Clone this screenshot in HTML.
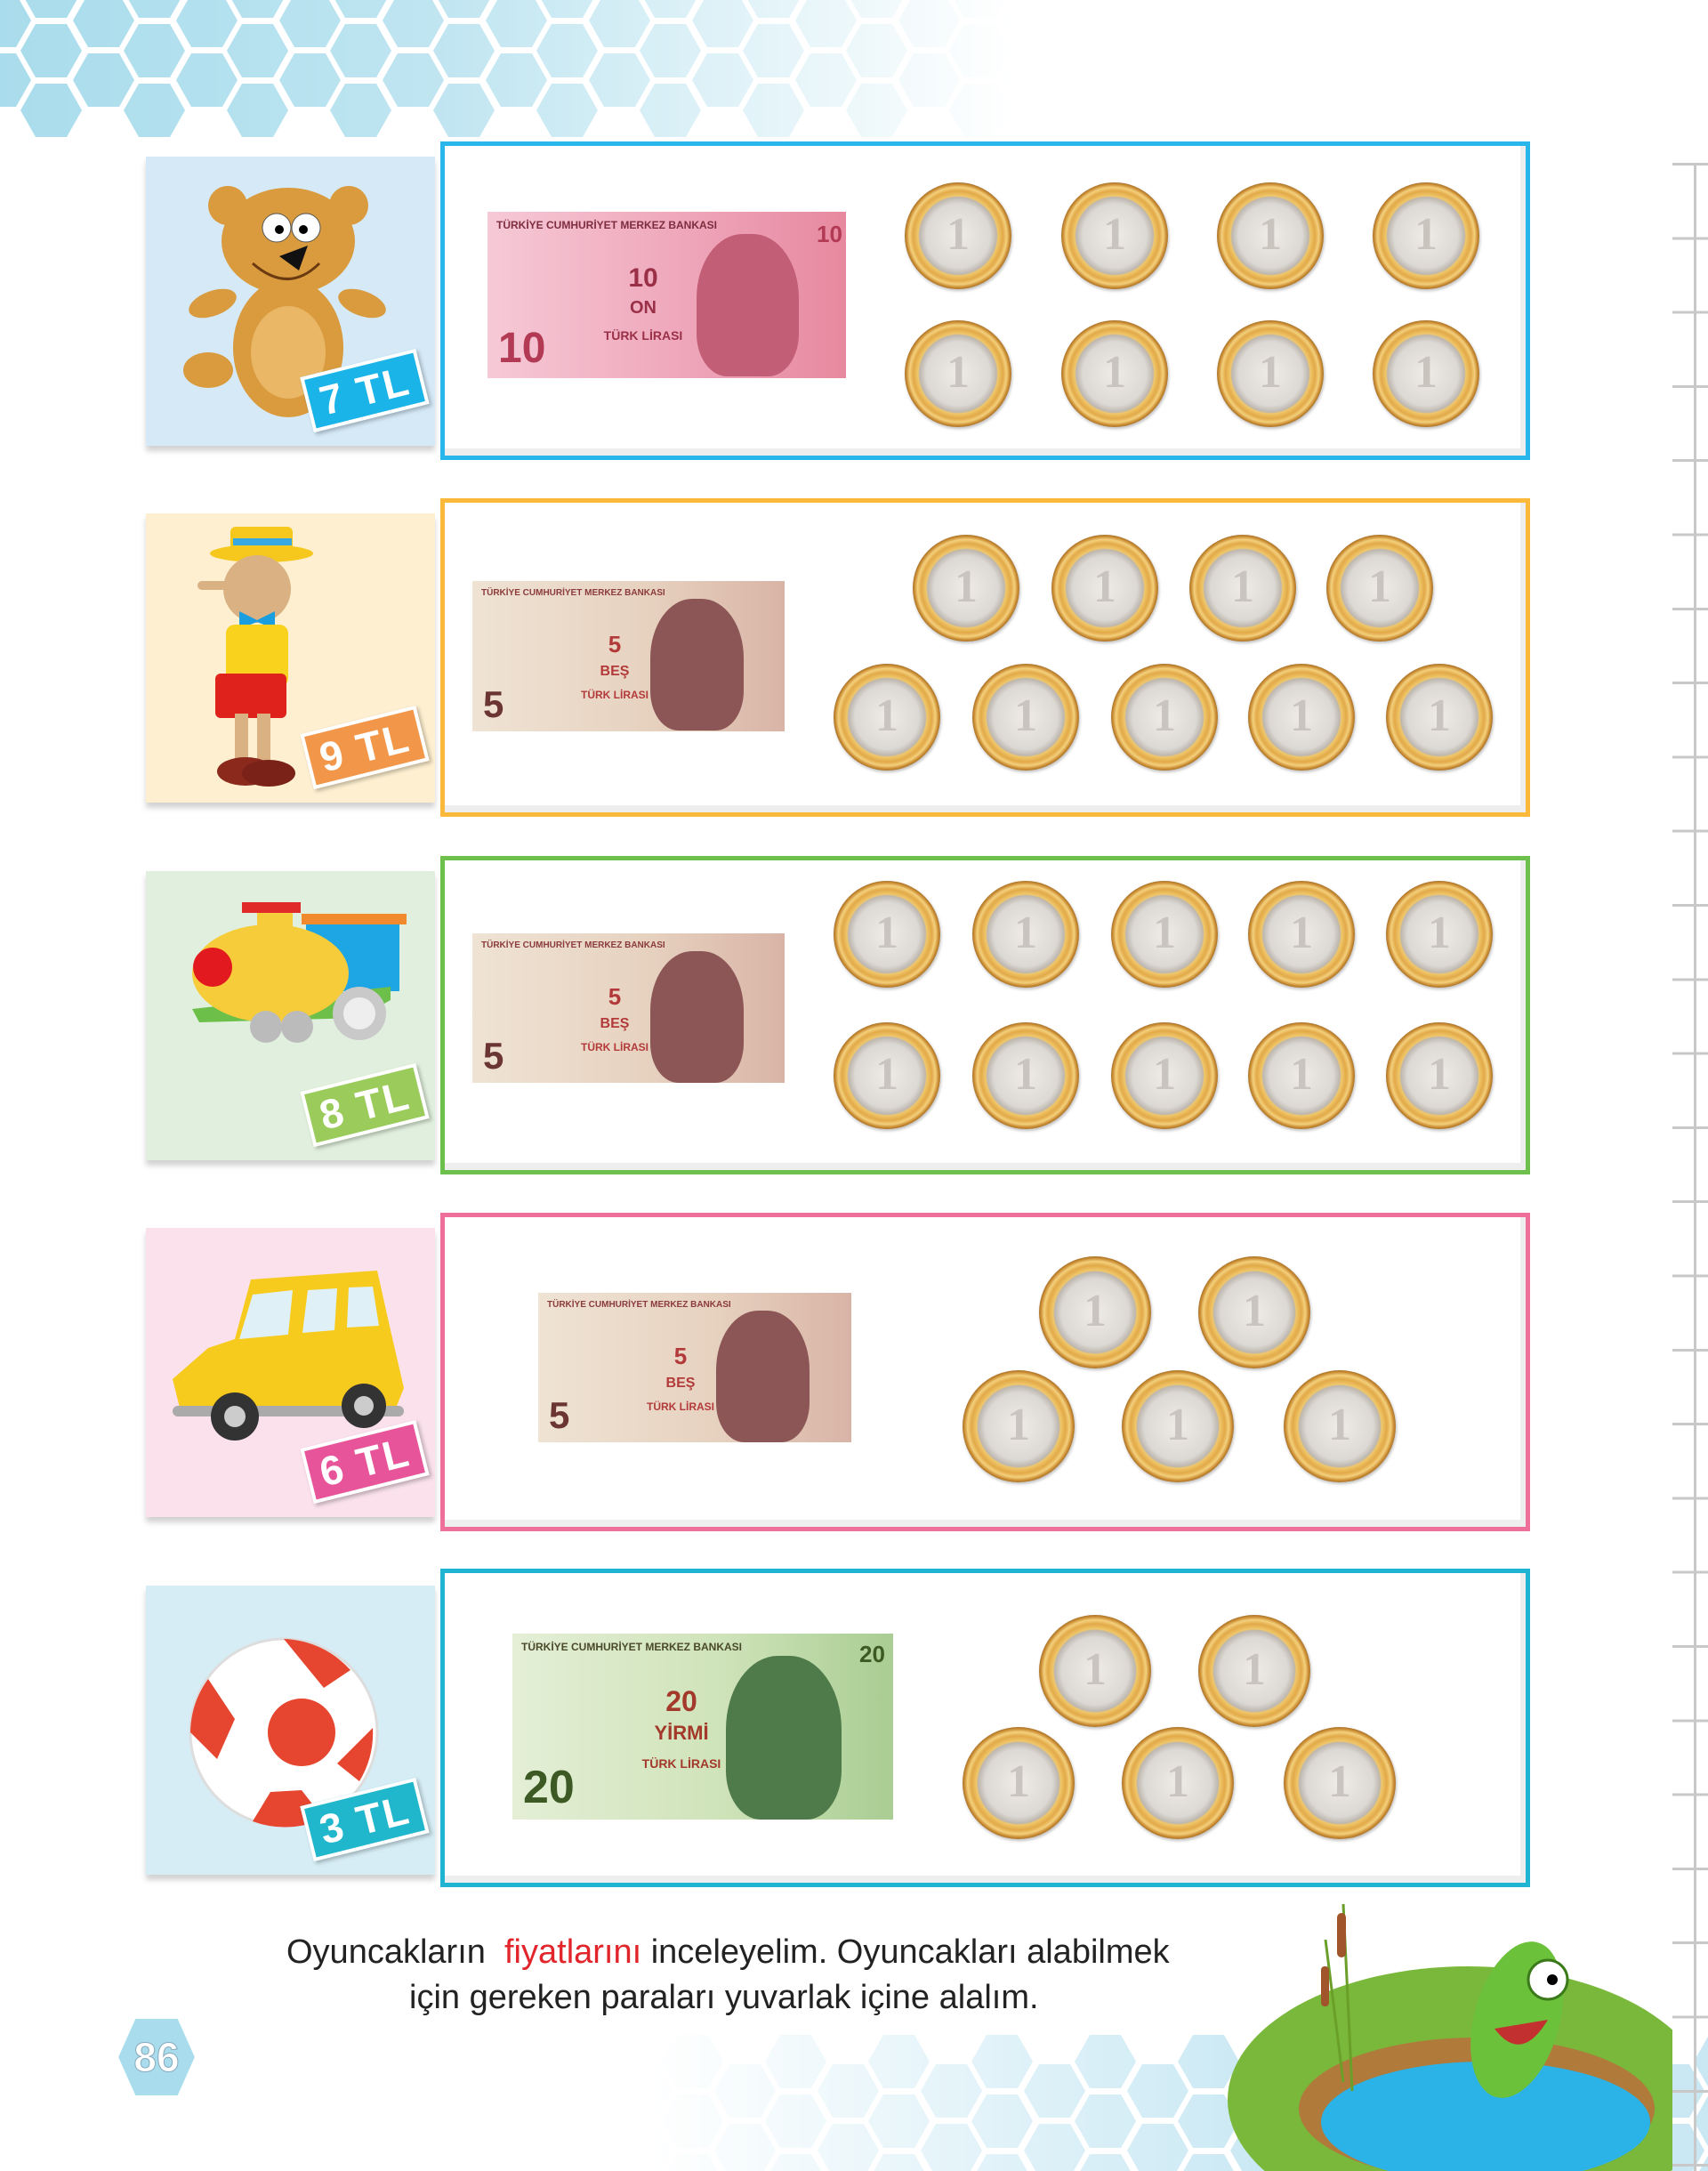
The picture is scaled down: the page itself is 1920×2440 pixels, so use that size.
<!DOCTYPE html>
<html><head><meta charset="utf-8"><style>
*{margin:0;padding:0;box-sizing:border-box}
body{width:1920px;height:2440px;background:#fff;position:relative;overflow:hidden;font-family:"Liberation Sans",sans-serif}
.abs{position:absolute}
.panel{position:absolute;left:164px;width:325px;height:325px;box-shadow:0 6px 6px rgba(0,0,0,.18)}
.box{position:absolute;left:495px;width:1225px;height:358px;border:5px solid;background:#fff;box-shadow:inset -6px -8px 0 #eee}
.lab{position:absolute;width:134px;height:64px;border:4px solid #fff;color:#fff;font-size:46px;font-weight:bold;text-align:center;line-height:56px;transform:rotate(-14deg);box-shadow:2px 3px 4px rgba(0,0,0,.25);letter-spacing:2px}
.coin{position:absolute;width:120px;height:120px;border-radius:50%;
background:radial-gradient(circle closest-side,#efece8 0,#dcd8d3 60%,#bdb7af 72%,#f0c76a 75%,#e2a948 84%,#f4d07c 91%,#c8892f 97%,#a87530 100%);
box-shadow:1px 2px 3px rgba(0,0,0,.25);color:#c9c4bd;font:bold 52px "Liberation Serif",serif;text-align:center;line-height:118px}
.note{position:absolute;overflow:hidden}
.note .t{position:absolute;left:10px;top:8px;font-size:12px;font-weight:bold;white-space:nowrap}
.note .big{position:absolute;left:12px;bottom:6px;font-weight:bold;font-size:48px}
.note .mid{position:absolute;font-weight:bold;text-align:center;line-height:1}
.note .face{position:absolute;border-radius:45% 45% 30% 30%}
.ruler{position:absolute;left:1880px;top:183px;width:40px;height:2257px;background:repeating-linear-gradient(to bottom,#c8c8c8 0 3px,transparent 3px 83.3px)}
.txt{position:absolute;font-family:"Liberation Sans Narrow","Liberation Sans",sans-serif;font-size:38px;color:#222;white-space:nowrap}
</style></head><body>

<svg class="abs" style="left:0;top:0" width="1200" height="160">
<defs>
<linearGradient id="fg" x1="0" x2="1"><stop offset="0" stop-color="#fff" stop-opacity="1"/><stop offset=".4" stop-color="#fff" stop-opacity=".75"/><stop offset=".95" stop-color="#fff" stop-opacity="0"/></linearGradient>
<mask id="m"><rect width="1200" height="160" fill="url(#fg)"/></mask>
<pattern id="hA" width="116" height="67" patternUnits="userSpaceOnUse" x="23" y="27">
<polygon points="17,0 52,0 69,30 52,60 17,60 0,30" fill="#a9dcec"/>
</pattern>
<pattern id="hB" width="116" height="67" patternUnits="userSpaceOnUse" x="82" y="-7">
<polygon points="17,0 52,0 69,30 52,60 17,60 0,30" fill="#a9dcec"/>
</pattern>
</defs>
<g mask="url(#m)"><rect width="1200" height="154" fill="url(#hA)"/><rect width="1200" height="121" fill="url(#hB)"/></g>
</svg>

<svg class="abs" style="left:0;top:2287px" width="1920" height="153">
<defs>
<linearGradient id="fg2" x1="0" x2="1920" gradientUnits="userSpaceOnUse"><stop offset=".38" stop-color="#fff" stop-opacity="0"/><stop offset=".75" stop-color="#fff" stop-opacity=".85"/></linearGradient>
<mask id="m2"><rect width="1920" height="153" fill="url(#fg2)"/></mask>
<pattern id="hC" width="116" height="67" patternUnits="userSpaceOnUse" x="48" y="0">
<polygon points="17,0 52,0 69,30 52,60 17,60 0,30" fill="#bfe4f1"/>
</pattern>
<pattern id="hD" width="116" height="67" patternUnits="userSpaceOnUse" x="107" y="33">
<polygon points="17,0 52,0 69,30 52,60 17,60 0,30" fill="#bfe4f1"/>
</pattern>
</defs>
<g mask="url(#m2)"><rect x="700" width="1220" height="153" fill="url(#hC)"/><rect x="700" y="33" width="1220" height="120" fill="url(#hD)"/></g>
</svg>

<div class="ruler"></div>
<div class="abs" style="left:1904px;top:183px;width:3px;height:2257px;background:#c8c8c8"></div>

<!-- Row 1 -->
<div class="panel" style="top:176px;background:#d5e9f7">
<svg width="325" height="325" style="position:absolute;left:0;top:0">
<ellipse cx="160" cy="215" rx="62" ry="78" fill="#d99b3e"/>
<ellipse cx="160" cy="220" rx="42" ry="52" fill="#e9b766"/>
<ellipse cx="75" cy="165" rx="28" ry="14" fill="#d99b3e" transform="rotate(-20 75 165)"/>
<ellipse cx="243" cy="165" rx="28" ry="14" fill="#d99b3e" transform="rotate(20 243 165)"/>
<ellipse cx="70" cy="240" rx="28" ry="20" fill="#d99b3e"/>
<ellipse cx="160" cy="95" rx="75" ry="60" fill="#d99b3e"/>
<circle cx="92" cy="55" r="22" fill="#d99b3e"/><circle cx="228" cy="55" r="22" fill="#d99b3e"/>
<circle cx="147" cy="80" r="16" fill="#fff" stroke="#555"/><circle cx="180" cy="80" r="16" fill="#fff" stroke="#555"/>
<circle cx="150" cy="82" r="5"/><circle cx="177" cy="82" r="5"/>
<path d="M150 112 L182 100 L172 128 Z" fill="#111"/>
<path d="M120 120 Q160 155 195 120" stroke="#6a3a10" stroke-width="3" fill="none"/>
</svg>
<div class="lab" style="left:179px;top:231px;background:#1ab4e8">7 TL</div>
</div>
<div class="box" style="top:159px;border-color:#29b6ea"></div>
<div class="note" style="left:548px;top:238px;width:403px;height:187px;background:linear-gradient(90deg,#f6c9d6,#eea3b8 60%,#e7899f)">
<div class="t" style="color:#7d2d3e">TÜRKİYE CUMHURİYET MERKEZ BANKASI</div>
<div class="face" style="left:235px;top:25px;width:115px;height:160px;background:#c25e75"></div>
<div class="big" style="color:#b33a55">10</div>
<div class="mid" style="left:130px;top:60px;width:90px;font-size:30px;color:#9a3047">10<br><span style="font-size:20px">ON</span><br><span style="font-size:14px">TÜRK LİRASI</span></div>
<div class="t" style="left:370px;top:10px;font-size:26px;color:#b33a55">10</div>
</div>
<div class="coin" style="left:1017px;top:205px">1</div><div class="coin" style="left:1193px;top:205px">1</div><div class="coin" style="left:1368px;top:205px">1</div><div class="coin" style="left:1543px;top:205px">1</div>
<div class="coin" style="left:1017px;top:360px">1</div><div class="coin" style="left:1193px;top:360px">1</div><div class="coin" style="left:1368px;top:360px">1</div><div class="coin" style="left:1543px;top:360px">1</div>

<!-- Row 2 -->
<div class="panel" style="top:577px;background:#fdefcf">
<svg width="325" height="325" style="position:absolute;left:0;top:0">
<rect x="95" y="15" width="70" height="35" rx="6" fill="#f6c81d"/><ellipse cx="130" cy="45" rx="58" ry="10" fill="#f6c81d"/>
<rect x="98" y="28" width="66" height="8" fill="#36a9e0"/>
<circle cx="125" cy="85" r="38" fill="#d9b183"/>
<rect x="58" y="76" width="40" height="10" rx="5" fill="#d9b183"/>
<path d="M105 110 L125 120 L145 110 L145 130 L125 122 L105 130Z" fill="#1a9ee0"/>
<rect x="90" y="125" width="70" height="70" rx="10" fill="#f8d21c"/>
<rect x="78" y="180" width="80" height="50" rx="6" fill="#e0221d"/>
<rect x="100" y="225" width="15" height="55" fill="#d9b183"/><rect x="125" y="225" width="15" height="55" fill="#d9b183"/>
<ellipse cx="112" cy="290" rx="32" ry="16" fill="#8b2a1c"/><ellipse cx="138" cy="292" rx="30" ry="15" fill="#7b2218"/>
</svg>
<div class="lab" style="left:179px;top:231px;background:#f29749">9 TL</div>
</div>
<div class="box" style="top:560px;border-color:#fbb93b"></div>
<div class="note" style="left:531px;top:653px;width:351px;height:169px;background:linear-gradient(90deg,#efe3d4,#e7d2c0 55%,#d9b4a6)">
<div class="t" style="color:#8b3b3b;font-size:10px">TÜRKİYE CUMHURİYET MERKEZ BANKASI</div>
<div class="face" style="left:200px;top:20px;width:105px;height:148px;background:#8c5656"></div>
<div class="big" style="color:#6b3535;font-size:42px">5</div>
<div class="mid" style="left:120px;top:58px;width:80px;font-size:26px;color:#b33a3a">5<br><span style="font-size:16px">BEŞ</span><br><span style="font-size:12px">TÜRK LİRASI</span></div>
</div>
<div class="coin" style="left:1026px;top:601px">1</div><div class="coin" style="left:1182px;top:601px">1</div><div class="coin" style="left:1337px;top:601px">1</div><div class="coin" style="left:1491px;top:601px">1</div>
<div class="coin" style="left:937px;top:746px">1</div><div class="coin" style="left:1093px;top:746px">1</div><div class="coin" style="left:1249px;top:746px">1</div><div class="coin" style="left:1403px;top:746px">1</div><div class="coin" style="left:1558px;top:746px">1</div>

<!-- Row 3 -->
<div class="panel" style="top:979px;background:#e1f0de">
<svg width="325" height="325" style="position:absolute;left:0;top:0">
<rect x="180" y="55" width="105" height="80" fill="#1ea6e4"/><rect x="175" y="48" width="118" height="12" fill="#f08a2c"/>
<path d="M52 155 L275 130 L275 145 L240 165 L60 170Z" fill="#6cc04a"/>
<ellipse cx="140" cy="115" rx="88" ry="55" fill="#f6cc3a"/>
<rect x="125" y="40" width="40" height="35" fill="#f6cc3a"/><rect x="108" y="35" width="66" height="12" fill="#e02a2a"/>
<circle cx="75" cy="108" r="22" fill="#e2191e"/>
<circle cx="240" cy="160" r="30" fill="#c9c9c9"/><circle cx="240" cy="160" r="18" fill="#eee"/>
<circle cx="135" cy="175" r="18" fill="#bbb"/><circle cx="170" cy="175" r="18" fill="#bbb"/>
</svg>
<div class="lab" style="left:179px;top:231px;background:#9bcb5b">8 TL</div>
</div>
<div class="box" style="top:962px;border-color:#6dc04b"></div>
<div class="note" style="left:531px;top:1049px;width:351px;height:168px;background:linear-gradient(90deg,#efe3d4,#e7d2c0 55%,#d9b4a6)">
<div class="t" style="color:#8b3b3b;font-size:10px">TÜRKİYE CUMHURİYET MERKEZ BANKASI</div>
<div class="face" style="left:200px;top:20px;width:105px;height:148px;background:#8c5656"></div>
<div class="big" style="color:#6b3535;font-size:42px">5</div>
<div class="mid" style="left:120px;top:58px;width:80px;font-size:26px;color:#b33a3a">5<br><span style="font-size:16px">BEŞ</span><br><span style="font-size:12px">TÜRK LİRASI</span></div>
</div>
<div class="coin" style="left:937px;top:990px">1</div><div class="coin" style="left:1093px;top:990px">1</div><div class="coin" style="left:1249px;top:990px">1</div><div class="coin" style="left:1403px;top:990px">1</div><div class="coin" style="left:1558px;top:990px">1</div>
<div class="coin" style="left:937px;top:1149px">1</div><div class="coin" style="left:1093px;top:1149px">1</div><div class="coin" style="left:1249px;top:1149px">1</div><div class="coin" style="left:1403px;top:1149px">1</div><div class="coin" style="left:1558px;top:1149px">1</div>

<!-- Row 4 -->
<div class="panel" style="top:1380px;background:#fae1eb">
<svg width="325" height="325" style="position:absolute;left:0;top:0">
<path d="M118 58 L260 48 L275 115 L290 180 L280 205 L40 210 L30 170 L70 135 L100 125Z" fill="#f7cb1d"/>
<path d="M120 75 L165 70 L160 120 L105 125Z" fill="#dff0f6"/><path d="M182 70 L215 68 L212 115 L176 118Z" fill="#dff0f6"/><path d="M228 67 L255 66 L262 110 L226 112Z" fill="#dff0f6"/>
<rect x="30" y="200" width="260" height="12" rx="6" fill="#aaa"/>
<circle cx="100" cy="212" r="27" fill="#333"/><circle cx="100" cy="212" r="12" fill="#ccc"/>
<circle cx="245" cy="200" r="25" fill="#333"/><circle cx="245" cy="200" r="11" fill="#ccc"/>
</svg>
<div class="lab" style="left:179px;top:231px;background:#e8549a">6 TL</div>
</div>
<div class="box" style="top:1363px;border-color:#ee6f9a"></div>
<div class="note" style="left:605px;top:1453px;width:352px;height:168px;background:linear-gradient(90deg,#efe3d4,#e7d2c0 55%,#d9b4a6)">
<div class="t" style="color:#8b3b3b;font-size:10px">TÜRKİYE CUMHURİYET MERKEZ BANKASI</div>
<div class="face" style="left:200px;top:20px;width:105px;height:148px;background:#8c5656"></div>
<div class="big" style="color:#6b3535;font-size:42px">5</div>
<div class="mid" style="left:120px;top:58px;width:80px;font-size:26px;color:#b33a3a">5<br><span style="font-size:16px">BEŞ</span><br><span style="font-size:12px">TÜRK LİRASI</span></div>
</div>
<div class="coin" style="left:1168px;top:1412px;width:126px;height:126px;line-height:124px">1</div><div class="coin" style="left:1347px;top:1412px;width:126px;height:126px;line-height:124px">1</div>
<div class="coin" style="left:1082px;top:1540px;width:126px;height:126px;line-height:124px">1</div><div class="coin" style="left:1261px;top:1540px;width:126px;height:126px;line-height:124px">1</div><div class="coin" style="left:1443px;top:1540px;width:126px;height:126px;line-height:124px">1</div>

<!-- Row 5 -->
<div class="panel" style="top:1782px;background:#d6edf5">
<svg width="325" height="325" style="position:absolute;left:0;top:0">
<circle cx="155" cy="165" r="105" fill="#fff" stroke="#ddd" stroke-width="3"/>
<path d="M155 60 A105 105 0 0 1 230 95 L200 115 Z" fill="#e6452f"/>
<circle cx="175" cy="165" r="38" fill="#e6452f"/>
<path d="M50 165 A105 105 0 0 1 70 105 L100 150 L80 195Z" fill="#e6452f"/>
<path d="M255 160 A105 105 0 0 1 240 220 L215 200 Z" fill="#e6452f"/>
<path d="M120 265 A105 105 0 0 0 200 262 L175 230 L140 232Z" fill="#e6452f"/>
</svg>
<div class="lab" style="left:179px;top:231px;background:#20b7cc">3 TL</div>
</div>
<div class="box" style="top:1763px;border-color:#1fb4d2"></div>
<div class="note" style="left:576px;top:1836px;width:428px;height:209px;background:linear-gradient(90deg,#e4efd6,#cfe3b9 55%,#a9cd93)">
<div class="t" style="color:#4a4a2a">TÜRKİYE CUMHURİYET MERKEZ BANKASI</div>
<div class="face" style="left:240px;top:25px;width:130px;height:184px;background:#4f7a4a"></div>
<div class="big" style="color:#3d5a24;font-size:52px">20</div>
<div class="mid" style="left:140px;top:60px;width:100px;font-size:32px;color:#a3392a">20<br><span style="font-size:22px">YİRMİ</span><br><span style="font-size:14px">TÜRK LİRASI</span></div>
<div class="t" style="left:390px;top:8px;font-size:26px;color:#3d5a24">20</div>
</div>
<div class="coin" style="left:1168px;top:1815px;width:126px;height:126px;line-height:124px">1</div><div class="coin" style="left:1347px;top:1815px;width:126px;height:126px;line-height:124px">1</div>
<div class="coin" style="left:1082px;top:1941px;width:126px;height:126px;line-height:124px">1</div><div class="coin" style="left:1261px;top:1941px;width:126px;height:126px;line-height:124px">1</div><div class="coin" style="left:1443px;top:1941px;width:126px;height:126px;line-height:124px">1</div>

<!-- text -->
<div class="txt" style="left:322px;top:2173px">Oyuncakların&nbsp; <span style="color:#e2242b">fiyatlarını</span> inceleyelim. Oyuncakları alabilmek</div>
<div class="txt" style="left:460px;top:2224px">için gereken paraları yuvarlak içine alalım.</div>

<!-- page number -->
<svg class="abs" style="left:126px;top:2262px" width="100" height="100">
<polygon points="25,5 75,5 95,50 75,95 25,95 5,50" fill="#a9dcec" stroke="#fff" stroke-width="4"/>
<text x="50" y="66" text-anchor="middle" font-family="Liberation Sans" font-weight="bold" font-size="46" fill="#fff" stroke="#8ab" stroke-width="1">86</text>
</svg>

<!-- frog pond -->
<svg class="abs" style="left:1360px;top:2120px" width="520" height="320">
<ellipse cx="290" cy="240" rx="270" ry="150" fill="#79b83a"/>
<ellipse cx="300" cy="250" rx="200" ry="80" fill="#b07a3a"/>
<ellipse cx="310" cy="265" rx="185" ry="68" fill="#2bb3e8"/>
<line x1="150" y1="20" x2="160" y2="230" stroke="#6a9f2a" stroke-width="3"/>
<rect x="143" y="30" width="10" height="50" rx="5" fill="#a0562a"/>
<line x1="130" y1="60" x2="150" y2="220" stroke="#6a9f2a" stroke-width="3"/>
<rect x="125" y="90" width="9" height="45" rx="4" fill="#a0562a"/>
<ellipse cx="345" cy="150" rx="48" ry="90" fill="#6cc13a" transform="rotate(15 345 150)"/>
<circle cx="380" cy="105" r="22" fill="#fff" stroke="#3a7a1a" stroke-width="3"/><circle cx="385" cy="105" r="6"/>
<path d="M320 160 Q350 200 380 150" fill="#c23030"/>
</svg>
</body></html>
